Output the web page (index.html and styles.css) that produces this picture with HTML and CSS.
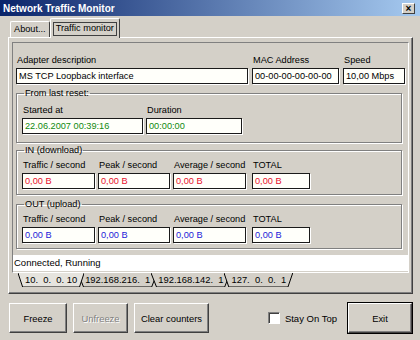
FILE: index.html
```html
<html>
<head>
    <link rel="stylesheet" href="styles.css">
</head>
<body>
    <div class="window">
        <div class="titlebar">
            <span class="title">Network Traffic Monitor</span>
            <span class="close">×</span>
        </div>

        <div class="tabs">
            <div class="tab">About...</div>
            <div class="tab active">Traffic monitor</div>
        </div>

        <div class="tabpanel">
            <div class="page">
                <div class="row top">
                    <div class="field">
                        <label>Adapter description</label>
                        <div class="box w-desc">MS TCP Loopback interface</div>
                    </div>
                    <div class="field">
                        <label>MAC Address</label>
                        <div class="box w-mac">00-00-00-00-00-00</div>
                    </div>
                    <div class="field">
                        <label>Speed</label>
                        <div class="box w-speed">10,00 Mbps</div>
                    </div>
                </div>

                <fieldset class="group g-reset">
                    <legend>From last reset:</legend>
                    <div class="row">
                        <div class="field">
                            <label>Started at</label>
                            <div class="box green w-start">22.06.2007 00:39:16</div>
                        </div>
                        <div class="field">
                            <label>Duration</label>
                            <div class="box green w-dur">00:00:00</div>
                        </div>
                    </div>
                </fieldset>

                <fieldset class="group g-in">
                    <legend>IN (download)</legend>
                    <div class="row">
                        <div class="field"><label>Traffic / second</label><div class="box red w-a">0,00 B</div></div>
                        <div class="field"><label>Peak / second</label><div class="box red w-b">0,00 B</div></div>
                        <div class="field"><label>Average / second</label><div class="box red w-a">0,00 B</div></div>
                        <div class="field total"><label>TOTAL</label><div class="box red w-total">0,00 B</div></div>
                    </div>
                </fieldset>

                <fieldset class="group g-out">
                    <legend>OUT (upload)</legend>
                    <div class="row">
                        <div class="field"><label>Traffic / second</label><div class="box blue w-a">0,00 B</div></div>
                        <div class="field"><label>Peak / second</label><div class="box blue w-b">0,00 B</div></div>
                        <div class="field"><label>Average / second</label><div class="box blue w-a">0,00 B</div></div>
                        <div class="field total"><label>TOTAL</label><div class="box blue w-total">0,00 B</div></div>
                    </div>
                </fieldset>

                <div class="status">Connected, Running</div>
            </div>

            <div class="iptabs">
                <div class="iptab selected"><svg viewBox="0 0 100 14" preserveAspectRatio="none"><path d="M0 0 L7 14 L93 14 L100 0"/></svg><span>10.  0.  0. 10</span></div>
                <div class="iptab"><svg viewBox="0 0 100 14" preserveAspectRatio="none"><path d="M0 0 L7 14 L93 14 L100 0"/></svg><span>192.168.216.  1</span></div>
                <div class="iptab"><svg viewBox="0 0 100 14" preserveAspectRatio="none"><path d="M0 0 L7 14 L93 14 L100 0"/></svg><span>192.168.142.  1</span></div>
                <div class="iptab"><svg viewBox="0 0 100 14" preserveAspectRatio="none"><path d="M0 0 L7 14 L93 14 L100 0"/></svg><span>127.  0.  0.  1</span></div>
            </div>
        </div>

        <div class="buttons">
            <button class="btn w-freeze">Freeze</button>
            <button class="btn w-unfreeze" disabled>Unfreeze</button>
            <button class="btn w-clear">Clear counters</button>
            <div class="spacer"></div>
            <label class="check"><span class="checkbox"></span>Stay On Top</label>
            <button class="btn default w-exit">Exit</button>
        </div>
    </div>
</body>
</html>
```

FILE: styles.css
```css
body {
    margin: 0;
    font-family: "Liberation Sans", Arial, sans-serif;
    font-size: 9.2px;
    color: #000;
}

.window {
    width: 420px;
    height: 340px;
    background-color: #d4d0c8;
    overflow: hidden;
}

.titlebar {
    height: 16px;
    display: flex;
    align-items: center;
    justify-content: space-between;
    padding: 0 5px 0 3px;
    background: linear-gradient(to right, #0a246a, #a6caf0);
}

.title {
    color: #fff;
    font-weight: bold;
    font-size: 10px;
}

.close {
    width: 11px;
    height: 9px;
    line-height: 9px;
    text-align: center;
    font-size: 10px;
    font-weight: bold;
    background-color: #d4d0c8;
    border: 1px solid;
    border-color: #fff #404040 #404040 #fff;
}

/* top tabs */
.tabs {
    height: 21px;
    display: flex;
    align-items: flex-end;
    padding-left: 10px;
}

.tab {
    height: 15px;
    line-height: 15px;
    padding: 0 3px;
    border: 1px solid;
    border-color: #fff #404040 transparent #fff;
    border-bottom: none;
    border-radius: 2px 2px 0 0;
}

.tab.active {
    position: relative;
    height: 19px;
    line-height: 19px;
    margin-bottom: -1px;
    padding: 0 5px;
    background-color: #d4d0c8;
    z-index: 1;
}

.tab.active::after {
    content: "";
    position: absolute;
    left: 2px;
    right: 2px;
    top: 3px;
    bottom: 2px;
    border: 1px solid #404040;
}

.tabpanel {
    height: 255px;
    margin: 0 7px 0 8px;
    border: 1px solid;
    border-color: #fff #404040 #404040 #fff;
    box-shadow: inset -1px -1px 0 #808080;
}

.page {
    height: 229px;
    margin: 4px 3px 0 3px;
    border: 1px solid;
    border-color: #808080 #fff #fff #808080;
}

.row {
    display: flex;
    gap: 3px;
}

.row.top {
    padding: 11px 0 0 3px;
    gap: 4px;
}

.field {
    display: flex;
    flex-direction: column;
    gap: 2px;
}

.field label {
    line-height: 12px;
    height: 12px;
    padding-left: 1px;
}

.field.total {
    margin-left: 3px;
}

.box {
    height: 16px;
    line-height: 14px;
    padding-left: 2px;
    box-sizing: border-box;
    background-color: #fffffa;
    border: 1px solid #1a1a1a;
    box-shadow: 1px 1px 0 #fff;
    white-space: nowrap;
}

.green { color: #108a10; }
.red { color: #e8102c; }
.blue { color: #1c1cd8; }

.w-desc { width: 232px; }
.w-mac { width: 87px; }
.w-speed { width: 62px; }
.w-start { width: 121px; }
.w-dur { width: 96px; }
.w-a { width: 73px; }
.w-b { width: 72px; }
.w-total { width: 58px; }

.group {
    width: 386px;
    box-sizing: border-box;
    margin: 3px 0 0 3px;
    padding: 3px 4px 5px 5px;
    border: 1px solid #808080;
    box-shadow: 1px 1px 0 #fff, inset 1px 1px 0 #fff;
    min-width: 0;
}

.group.g-reset {
    padding-top: 5px;
    padding-bottom: 8px;
}

.group.g-in {
    margin-top: 1px;
}

.group legend {
    padding: 0 1px;
    margin-left: 2px;
    line-height: 12px;
}

.status {
    height: 16px;
    line-height: 16px;
    margin-top: 6px;
    padding-left: 1px;
    background-color: #fff;
    font-size: 9.5px;
}

/* bottom ip tabs */
.iptabs {
    display: flex;
    padding-left: 9px;
    height: 15px;
}

.iptab {
    position: relative;
    height: 14px;
    line-height: 13px;
    padding: 0 7px;
    margin-right: -6px;
    font-size: 9.4px;
}

.iptab svg {
    position: absolute;
    left: 0;
    top: 0;
    width: 100%;
    height: 14px;
}

.iptab path {
    fill: #d4d0c8;
    stroke: #000;
    stroke-width: 1;
    vector-effect: non-scaling-stroke;
}

.iptab.selected {
    z-index: 1;
}

.iptab.selected path {
    fill: #e6e4de;
}

.iptab span {
    position: relative;
    white-space: pre;
}

/* bottom buttons */
.buttons {
    display: flex;
    align-items: center;
    gap: 6px;
    padding: 9px 8px 0 9px;
}

.spacer {
    flex: 1;
}

.btn {
    height: 30px;
    font-family: "Liberation Sans", Arial, sans-serif;
    font-size: 9.4px;
    color: #000;
    background-color: #d4d0c8;
    border: 1px solid;
    border-color: #fff #404040 #404040 #fff;
    box-shadow: inset -1px -1px 0 #808080;
    padding: 0;
}

.btn:disabled {
    color: #808080;
    text-shadow: 1px 1px 0 #fff;
}

.btn.default {
    outline: 1px solid #000;
}

.w-freeze { width: 58px; }
.w-unfreeze { width: 55px; }
.w-clear { width: 75px; }
.w-exit { width: 64px; }

.check {
    display: flex;
    align-items: center;
    gap: 5px;
    margin-right: 5px;
    font-size: 9.5px;
}

.checkbox {
    width: 10px;
    height: 10px;
    background-color: #fff;
    border: 1px solid;
    border-color: #808080 #fff #fff #808080;
    box-shadow: inset 1px 1px 0 #404040;
}
```
